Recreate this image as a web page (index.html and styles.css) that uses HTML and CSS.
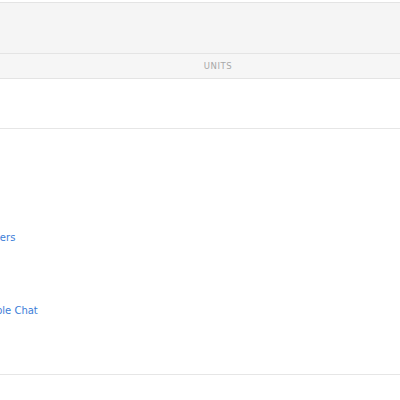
FILE: index.html
```html
<!DOCTYPE html>
<html>
<head>
<meta charset="utf-8">
<link rel="stylesheet" href="styles.css">
</head>
<body>
<div class="panel">
  <div class="toolbar"></div>
  <div class="head-row">
    <div class="col-name"></div>
    <div class="col-units">UNITS</div>
  </div>
  <div class="row"></div>
  <div class="links">
    <a class="link link-first" href="#">Members</a>
    <a class="link link-second" href="#">People Chat</a>
  </div>
  <div class="footer"></div>
</div>
</body>
</html>
```
FILE: styles.css
```css
html, body {
  margin: 0;
  padding: 0;
  background: #ffffff;
  overflow: hidden;
  width: 400px;
  height: 400px;
}
body {
  font-family: "DejaVu Sans", Verdana, sans-serif;
}
.panel {
  padding-top: 2px;
}
.toolbar {
  height: 50px;
  background: #f5f5f5;
  border-top: 1px solid #e4e4e4;
  border-bottom: 1px solid #e4e4e4;
}
.head-row {
  display: flex;
  height: 24px;
  background: #f6f6f6;
  border-bottom: 1px solid #e4e4e4;
}
.col-name {
  width: 36px;
}
.col-units {
  flex: 1;
  display: flex;
  align-items: center;
  justify-content: center;
  font-size: 8.5px;
  letter-spacing: 0.6px;
  color: #a8a8a8;
}
.row {
  height: 49px;
  border-bottom: 1px solid #e6e6e6;
}
.links {
  height: 245px;
  display: flex;
  flex-direction: column;
  border-bottom: 1px solid #e6e6e6;
}
.link {
  font-size: 10px;
  color: #3b7dd8;
  text-decoration: none;
  white-space: nowrap;
  line-height: 12px;
}
.link-first {
  margin-top: 103px;
  margin-left: -31px;
}
.link-second {
  margin-top: 61px;
  margin-left: -22px;
}
.footer {
  height: 26px;
}
```
